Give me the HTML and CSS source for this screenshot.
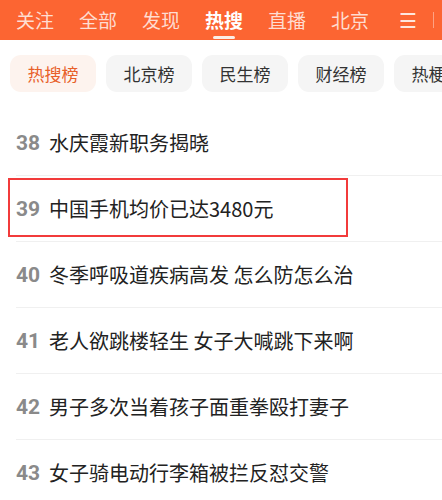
FILE: index.html
```html
<!DOCTYPE html>
<html>
<head>
    <title>热搜</title>
    <link rel="stylesheet" href="styles.css">
</head>
<body>
    <div class="top-bar">
        <div class="tabs">
            <span class="tab">关注</span>
            <span class="tab">全部</span>
            <span class="tab">发现</span>
            <span class="tab active">热搜</span>
            <span class="tab">直播</span>
            <span class="tab">北京</span>
        </div>
        <span class="menu">☰</span>
        <span class="sep"></span>
    </div>

    <div class="chips">
        <span class="chip current">热搜榜</span>
        <span class="chip">北京榜</span>
        <span class="chip">民生榜</span>
        <span class="chip">财经榜</span>
        <span class="chip">热梗榜</span>
    </div>

    <ul class="hot-list">
        <li class="hot-item"><span class="rank">38</span><span class="title">水庆霞新职务揭晓</span></li>
        <li class="hot-item marked"><span class="rank">39</span><span class="title">中国手机均价已达3480元</span></li>
        <li class="hot-item"><span class="rank">40</span><span class="title">冬季呼吸道疾病高发 怎么防怎么治</span></li>
        <li class="hot-item"><span class="rank">41</span><span class="title">老人欲跳楼轻生 女子大喊跳下来啊</span></li>
        <li class="hot-item"><span class="rank">42</span><span class="title">男子多次当着孩子面重拳殴打妻子</span></li>
        <li class="hot-item"><span class="rank">43</span><span class="title">女子骑电动行李箱被拦反怼交警</span></li>
    </ul>
</body>
</html>
```

FILE: styles.css
```css
body {
    margin: 0;
    width: 442px;
    height: 500px;
    overflow: hidden;
    background-color: #fff;
    font-family: "Noto Sans CJK SC", "Noto Sans", sans-serif;
    color: #222;
}
.top-bar {
    height: 40px;
    background-color: #fc6532;
    display: flex;
    align-items: center;
    padding-left: 16px;
    box-sizing: border-box;
}
.tabs {
    display: flex;
    gap: 25px;
}
.tab {
    position: relative;
    font-size: 19px;
    line-height: 40px;
    color: rgba(255,255,255,0.78);
}
.tab.active {
    color: #fff;
    font-weight: bold;
}
.tab.active::after {
    content: "";
    position: absolute;
    left: 50%;
    bottom: 1px;
    width: 22px;
    height: 3px;
    margin-left: -11px;
    border-radius: 2px;
    background-color: #fbeee6;
}
.menu {
    margin-left: 30px;
    font-size: 20px;
    color: rgba(255,255,255,0.85);
    line-height: 40px;
}
.sep {
    width: 1px;
    height: 16px;
    margin-left: 16px;
    background-color: rgba(255,255,255,0.4);
}
.chips {
    display: flex;
    gap: 10px;
    padding: 15px 0 0 10px;
    overflow: hidden;
    white-space: nowrap;
}
.chip {
    flex: none;
    width: 86px;
    height: 37px;
    line-height: 37px;
    text-align: center;
    border-radius: 11px;
    background-color: #f5f5f5;
    color: #333;
    font-size: 17px;
}
.chip.current {
    background-color: #fdf3ee;
    color: #e8602a;
}
.hot-list {
    list-style: none;
    margin: 18px 0 0;
    padding: 0;
}
.hot-item {
    position: relative;
    height: 65px;
    margin-left: 16px;
    display: flex;
    align-items: center;
    border-bottom: 1px solid #f0f0f0;
}
.rank {
    width: 33px;
    font-family: Roboto, "Liberation Sans", sans-serif;
    font-weight: bold;
    font-size: 21px;
    color: #8a8a8a;
}
.title {
    font-size: 20px;
    color: #222;
}
.marked::before {
    content: "";
    position: absolute;
    left: -8px;
    top: 2px;
    width: 336px;
    height: 55px;
    border: 2px solid #f23b3b;
}
```
